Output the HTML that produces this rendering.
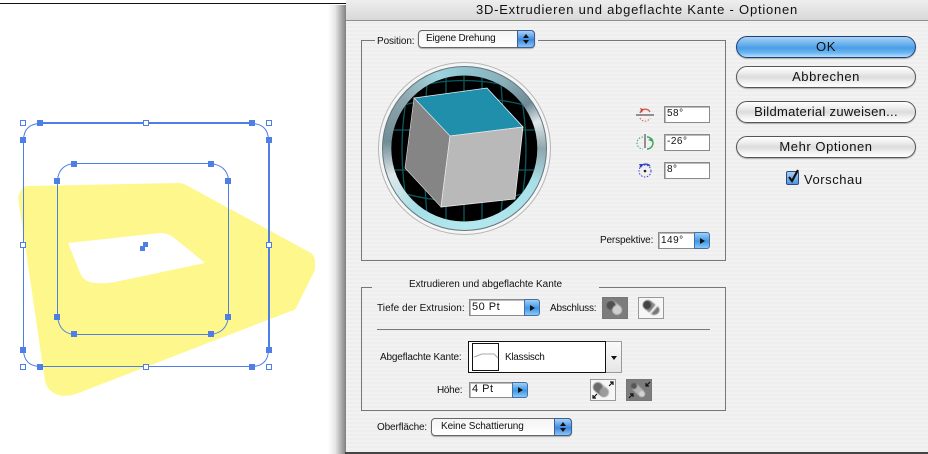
<!DOCTYPE html>
<html><head><meta charset="utf-8"><style>
html,body{margin:0;padding:0}
body{width:928px;height:454px;overflow:hidden;background:#fff;position:relative;font-family:"Liberation Sans",sans-serif;color:#111}
.a{position:absolute}
.t{position:absolute;white-space:nowrap;font-size:10px;line-height:13px}
.btn{position:absolute;left:736px;width:178px;height:20px;border:1px solid #555;border-radius:11px;text-align:center;font-size:13px;line-height:19px;letter-spacing:.55px;background:linear-gradient(#fff 0,#ececec 30%,#dcdcdc 50%,#f4f4f4 80%,#fff 100%);box-shadow:0 1px 1px #aaa}
.field{position:absolute;background:#fff;border:1px solid #8a8a8a;box-shadow:inset 1px 1px 0 #bbb;font-size:10px;letter-spacing:.5px;padding-left:2px;box-sizing:border-box}
.arrow{position:absolute;width:16px;background:linear-gradient(#9fd0f5,#3f97e6 55%,#8cc8f5);border:1px solid #456fa5;border-radius:0 3px 3px 0;box-sizing:border-box}
.arrow:after{content:"";position:absolute;left:5px;top:50%;margin-top:-3px;border-left:5px solid #111;border-top:3px solid transparent;border-bottom:3px solid transparent}
.sel{position:absolute;border:1px solid #666;border-radius:4px;background:linear-gradient(#f4f4f4,#fff);box-sizing:border-box;font-size:10px;line-height:14px;padding-left:7px;box-shadow:0 1px 1px #aaa}
.sel i{position:absolute;right:-1px;top:-1px;bottom:-1px;width:18px;background:linear-gradient(#a7d3f6,#3f87df 55%,#8cc4f3);border:1px solid #3a5f95;border-radius:0 4px 4px 0;box-sizing:border-box}
.sel i:before,.sel i:after{content:"";position:absolute;left:5px;border-left:3px solid transparent;border-right:3px solid transparent}
.sel i:before{top:3px;border-bottom:4px solid #111}
.sel i:after{bottom:3px;border-top:4px solid #111}
.ln{position:absolute;background:#777}
.ib{position:absolute;box-sizing:border-box;border:1px solid #999;background:#f6f6f6}
.ib.d{background:#7c7c7c;border-color:#777}
.soft{filter:blur(.5px)}
</style></head><body>

<!-- artwork -->
<div class="a" style="left:0;top:3px;width:346px;height:1px;background:#111"></div>
<svg class="a" style="left:0;top:0" width="340" height="454" viewBox="0 0 340 454">
<path fill="#fef78b" fill-rule="evenodd" d="M18 197 L22 188 Q24 186 30 186 L178 183 Q182 183 186 185 L311 253 Q315 256 315 262 L315 270 L296 308 Q295 310 291 311 L76 394 Q66 397 58 395 Q47 391 45 381 Z M68 243 L160 233 Q168 233 173 237 L205 263 L115 282 Q105 284 95 283 Q85 282 81 275 Z"/>
<g fill="none" stroke="#4f7fe6" stroke-width="1">
<path d="M23.5 140 V350 Q24 366 40 366.5 H252 Q268 366 268.5 350 V140 Q268 124 252 123.5 H40 Q24 124 23.5 140 Z"/>
<path d="M57.5 180 V316 Q59 333 74 334.5 H210 Q227 333 228.5 316 V180 Q227 165 210 163.5 H74 Q59 165 57.5 180 Z"/>
</g>
<path d="M40 123 H252" stroke="#4f7fe6" stroke-width="2"/>
<path d="M269 140 V350" stroke="#4f7fe6" stroke-width="2"/>
<g fill="#4f7fe6">
<rect x="37" y="120" width="6" height="6"/><rect x="249" y="120" width="6" height="6"/>
<rect x="20" y="137" width="6" height="6"/><rect x="266" y="137" width="6" height="6"/>
<rect x="20" y="347" width="6" height="6"/><rect x="266" y="347" width="6" height="6"/>
<rect x="37" y="364" width="6" height="6"/><rect x="249" y="364" width="6" height="6"/>
<rect x="71" y="161" width="6" height="6"/><rect x="208" y="161" width="6" height="6"/>
<rect x="54" y="178" width="6" height="6"/><rect x="225" y="178" width="6" height="6"/>
<rect x="54" y="314" width="6" height="6"/><rect x="225" y="314" width="6" height="6"/>
<rect x="71" y="331" width="6" height="6"/><rect x="208" y="331" width="6" height="6"/>
<rect x="140" y="246" width="5" height="5"/><rect x="143" y="242" width="5" height="5"/>
</g>
<g fill="#fff" stroke="#4f7fe6" stroke-width="1">
<rect x="20.5" y="120.5" width="5" height="5"/><rect x="143.5" y="120.5" width="5" height="5"/><rect x="266.5" y="120.5" width="5" height="5"/>
<rect x="20.5" y="242.5" width="5" height="5"/><rect x="266.5" y="242.5" width="5" height="5"/>
<rect x="20.5" y="364.5" width="5" height="5"/><rect x="143.5" y="364.5" width="5" height="5"/><rect x="266.5" y="364.5" width="5" height="5"/>
</g>
</svg>

<!-- shadow -->
<div class="a" style="left:328px;top:5px;width:18px;height:449px;background:linear-gradient(90deg,rgba(90,90,90,0),rgba(90,90,90,.15) 40%,rgba(60,60,60,.65))"></div>
<div class="a" style="left:345px;top:452px;width:583px;height:2px;background:#444"></div>

<!-- dialog -->
<div class="a" style="left:346px;top:0;width:582px;height:452px;background:repeating-linear-gradient(#f2f2f2 0,#f2f2f2 2px,#eeeeee 2px,#eeeeee 4px)"></div>
<div class="a" style="left:346px;top:0;width:582px;height:20px;background:linear-gradient(#eeeeee,#d8d8d8);border-bottom:1px solid #8e8e8e"></div>
<div class="t" style="left:346px;width:582px;top:2px;text-align:center;font-size:13px;line-height:16px;letter-spacing:.78px">3D-Extrudieren und abgeflachte Kante - Optionen</div>

<!-- Position group -->
<div class="ln" style="left:361px;top:40px;width:14px;height:1px"></div>
<div class="ln" style="left:538px;top:40px;width:188px;height:1px"></div>
<div class="ln" style="left:361px;top:40px;width:1px;height:221px"></div>
<div class="ln" style="left:725px;top:40px;width:1px;height:221px"></div>
<div class="ln" style="left:361px;top:260px;width:365px;height:1px"></div>
<div class="t" style="left:377px;top:35px;letter-spacing:-.1px">Position:</div>
<div class="sel" style="left:418px;top:30px;width:117px;height:18px;line-height:15px;letter-spacing:-.2px">Eigene Drehung<i></i></div>

<!-- sphere -->
<div class="a" style="left:378px;top:62px;width:173px;height:173px;border-radius:50%;background:#f5f5f5;border:1px solid #b5b5b5;box-sizing:border-box"></div>
<div class="a" style="left:382px;top:66px;width:165px;height:165px;border-radius:50%;box-sizing:border-box;border:1px solid #66767e;background:conic-gradient(#8fc4cf 0deg,#8ab0ba 30deg,#6f8a96 55deg,#dfe8ea 70deg,#8fa6ae 90deg,#a8e0e8 115deg,#b3e8ee 180deg,#a8dfe6 220deg,#e0e8ea 250deg,#708c96 275deg,#8fa8b0 310deg,#9fd4de 340deg,#8fc4cf 360deg)"></div>
<svg class="a" style="left:376px;top:60px" width="176" height="178" viewBox="0 0 176 178">
<defs><clipPath id="c"><circle cx="88.3" cy="88.5" r="73"/></clipPath></defs>
<circle cx="88.3" cy="88.5" r="73" fill="#000"/>
<g clip-path="url(#c)" fill="none" stroke="#0c5a60" stroke-width="1.3">
<path d="M70 10V170M88 10V170M106 10V170M52 15Q44 89 52 165M124 15Q132 89 124 165M32 30Q20 89 32 150M144 30Q156 89 144 150"/>
<path d="M10 50Q88 25 166 50M10 70H166M10 110H166M10 128Q88 155 166 128M20 150Q88 175 156 150M20 33Q88 8 156 33"/>
</g>
<polygon points="38,38 111,28 147,67 74,76" fill="#1f8fac" stroke="#e8f2f4" stroke-width=".8"/>
<polygon points="38,38 74,76 65,147 29,108" fill="#858585" stroke="#e0e0e0" stroke-width=".6"/>
<polygon points="74,76 147,67 139,139 65,147" fill="#b9b9b9" stroke="#e8e8e8" stroke-width=".8"/>
</svg>

<!-- rotation icons -->
<svg class="a" style="left:632px;top:102px" width="30" height="80" viewBox="0 0 30 80">
<path d="M4 13H22" stroke="#333"/>
<path d="M8 11A5.5 5.5 0 0 1 18 10" fill="none" stroke="#d85a4a" stroke-width="1.4"/>
<path d="M8 6l3 1-1 4z" fill="#c8402e"/>
<path d="M8 16A5.5 5.5 0 0 0 18 16" fill="none" stroke="#d85a4a" stroke-dasharray="1.5 1.5"/>
<path d="M13 32V46" stroke="#333"/>
<path d="M11 35A6 6 0 0 0 11 47" fill="none" stroke="#3ba55a" stroke-dasharray="1.5 1.5"/>
<path d="M15 35A6 6 0 0 1 15 47" fill="none" stroke="#3ba55a" stroke-width="1.4"/>
<path d="M16 38l4-2 1 4z" fill="#3ba55a"/>
<circle cx="13" cy="69" r="6" fill="none" stroke="#3340c8" stroke-dasharray="1.5 1.5"/>
<path d="M8 65A6.5 6.5 0 0 1 18 64" fill="none" stroke="#3340c8" stroke-width="1.4"/>
<path d="M7 62l4 0-2 4z" fill="#3340c8"/>
<circle cx="13" cy="69" r="1.3" fill="#222"/>
</svg>
<div class="field" style="left:664px;top:106px;width:46px;height:17px;line-height:14px">58°</div>
<div class="field" style="left:664px;top:134px;width:46px;height:17px;line-height:14px">-26°</div>
<div class="field" style="left:664px;top:162px;width:46px;height:17px;line-height:14px">8°</div>
<div class="t" style="left:600px;top:234px;letter-spacing:-.15px">Perspektive:</div>
<div class="field" style="left:658px;top:232px;width:37px;height:17px;line-height:15px">149°</div>
<div class="arrow" style="left:694px;top:232px;height:17px"></div>

<!-- Buttons -->
<div class="btn" style="top:36px;border-color:#1f3f78;background:linear-gradient(#a9d2f5 0,#7dbcf0 25%,#4a9de8 55%,#6fb8f2 80%,#b5e0fb 100%)">OK</div>
<div class="btn" style="top:66px">Abbrechen</div>
<div class="btn" style="top:101px;letter-spacing:.3px">Bildmaterial zuweisen...</div>
<div class="btn" style="top:136px">Mehr Optionen</div>
<div class="a" style="left:786px;top:171px;width:11px;height:12px;border:1px solid #2a4a80;border-radius:2px;background:linear-gradient(#a9cdf2,#4f98e6)"></div>
<svg class="a" style="left:786px;top:168px" width="16" height="16" viewBox="0 0 16 16"><path d="M3 9l3 4 6-11" fill="none" stroke="#111" stroke-width="2.2"/></svg>
<div class="t" style="left:804px;top:172px;font-size:13px;line-height:15px;letter-spacing:.55px">Vorschau</div>

<!-- Extrude group -->
<div class="ln" style="left:361px;top:287px;width:11px;height:1px"></div>
<div class="ln" style="left:599px;top:287px;width:127px;height:1px"></div>
<div class="ln" style="left:361px;top:287px;width:1px;height:124px"></div>
<div class="ln" style="left:725px;top:287px;width:1px;height:124px"></div>
<div class="ln" style="left:361px;top:410px;width:365px;height:1px"></div>
<div class="t" style="left:409px;top:278px;letter-spacing:-.03px">Extrudieren und abgeflachte Kante</div>
<div class="t" style="left:377px;top:302px;letter-spacing:.07px">Tiefe der Extrusion:</div>
<div class="field" style="left:469px;top:299px;width:56px;height:17px;font-size:11px;line-height:14px">50 Pt</div>
<div class="arrow" style="left:524px;top:299px;height:17px"></div>
<div class="t" style="left:550px;top:302px;letter-spacing:-.2px">Abschluss:</div>

<svg width="0" height="0" style="position:absolute"><defs>
<linearGradient id="cy" gradientUnits="userSpaceOnUse" x1="18" y1="5" x2="8" y2="16"><stop offset="0" stop-color="#d8d8d8"/><stop offset=".5" stop-color="#a8a8a8"/><stop offset="1" stop-color="#585858"/></linearGradient>
</defs></svg>
<div class="ib d" style="left:602px;top:297px;width:26px;height:22px"></div>
<svg class="a soft" style="left:602px;top:297px" width="26" height="22" viewBox="0 0 26 22"><line x1="9" y1="8" x2="15" y2="13" stroke="url(#cy)" stroke-width="10" stroke-linecap="round"/><circle cx="9" cy="8" r="4.5" fill="#505050"/><circle cx="15" cy="13" r="4.8" fill="#cfcfcf"/></svg>
<div class="ib" style="left:638px;top:297px;width:26px;height:22px"></div>
<svg class="a soft" style="left:638px;top:297px" width="26" height="22" viewBox="0 0 26 22"><line x1="10" y1="8" x2="16" y2="13" stroke="#8a8a8a" stroke-width="10" stroke-linecap="round"/><circle cx="9" cy="8" r="4.2" fill="#444"/><circle cx="17" cy="13" r="4.5" fill="#777"/><path d="M11 16l7-9 2 2-7 8z" fill="#f0f0f0"/></svg>

<div class="ln" style="left:377px;top:329px;width:333px;height:1px"></div>

<div class="t" style="left:380px;top:351px;letter-spacing:-.17px">Abgeflachte Kante:</div>
<div class="a" style="left:468px;top:341px;width:138px;height:32px;box-sizing:border-box;border:1.5px solid #111;background:#fff"></div>
<div class="a" style="left:472px;top:343px;width:27px;height:28px;box-sizing:border-box;border:1px solid #111;background:#fff"></div>
<svg class="a" style="left:473px;top:345px" width="26" height="22" viewBox="0 0 26 22"><path d="M1 12L9 9H21L25 13" fill="none" stroke="#aaa"/></svg>
<div class="t" style="left:505px;top:351px;letter-spacing:-.3px">Klassisch</div>
<div class="a" style="left:606px;top:341px;width:16px;height:32px;box-sizing:border-box;border:1px solid #999;border-left:0;background:linear-gradient(#fafafa,#e6e6e6)"></div>
<div class="a" style="left:611px;top:356px;border-left:3px solid transparent;border-right:3px solid transparent;border-top:4px solid #111"></div>

<div class="t" style="left:437px;top:384px;letter-spacing:-.3px">Höhe:</div>
<div class="field" style="left:469px;top:382px;width:44px;height:16px;font-size:11px;line-height:13px">4 Pt</div>
<div class="arrow" style="left:512px;top:382px;height:16px"></div>

<div class="ib" style="left:590px;top:379px;width:26px;height:22px"></div>
<svg class="a" style="left:590px;top:379px" width="26" height="22" viewBox="0 0 26 22"><g class="soft"><line x1="8" y1="8" x2="14" y2="13" stroke="url(#cy)" stroke-width="10" stroke-linecap="round"/><circle cx="8" cy="8" r="4.5" fill="#6a6a6a"/><circle cx="14" cy="13" r="4.5" fill="#9c9c9c"/></g><path d="M19 7l4-4M20 3h3v3M3 19l4-4M3 16v3h3" stroke="#111" stroke-width="1.2" fill="none"/></svg>
<div class="ib d" style="left:626px;top:379px;width:26px;height:22px"></div>
<svg class="a" style="left:626px;top:379px" width="26" height="22" viewBox="0 0 26 22"><g class="soft"><line x1="9" y1="8" x2="15" y2="14" stroke="#b4b4b4" stroke-width="7" stroke-linecap="round"/><circle cx="8" cy="7" r="3" fill="#555"/><circle cx="16" cy="15" r="3" fill="#d4d4d4"/></g><path d="M24 3l-4 4M20 4v3h3M3 19l4-4M7 18v-3H4" stroke="#111" stroke-width="1.2" fill="none"/></svg>

<div class="t" style="left:377px;top:421px;letter-spacing:-.15px">Oberfläche:</div>
<div class="sel" style="left:431px;top:418px;width:141px;height:18px;line-height:15px;padding-left:9px;letter-spacing:-.1px">Keine Schattierung<i></i></div>

</body></html>
